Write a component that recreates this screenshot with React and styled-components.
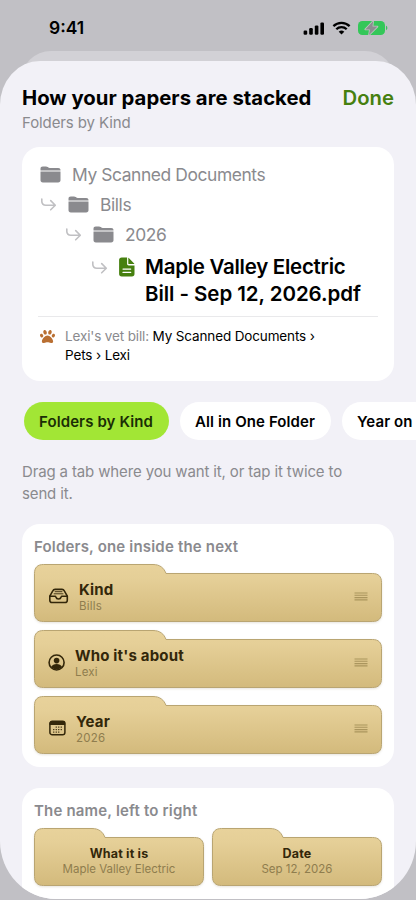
import React from 'react';
import styled, { createGlobalStyle } from 'styled-components';
import { FaPaw } from 'react-icons/fa';

const GlobalStyle = createGlobalStyle`
  * {
    box-sizing: border-box;
  }

  body {
    margin: 0;
    background: #c1c0c5;
    font-family: Inter, "Liberation Sans", sans-serif;
    color: #000;
  }

  svg {
    display: block;
    flex-shrink: 0;
  }
`;

const Screen = styled.div`
  width: 416px;
  height: 900px;
  overflow: hidden;
  display: flex;
  flex-direction: column;
  background: #c1c0c5;
`;

const StatusBar = styled.div`
  height: 51px;
  flex-shrink: 0;
  padding: 5px 28px 0 49px;
  display: flex;
  align-items: center;
  justify-content: space-between;
`;

const Clock = styled.div`
  font-size: 17.5px;
  font-weight: 600;
  line-height: 22px;
`;

const StatusIcons = styled.div`
  display: flex;
  align-items: center;
  gap: 7px;
`;

const PreviousSheet = styled.div`
  height: 40px;
  flex-shrink: 0;
  margin: 0 21px;
  border-radius: 30px 30px 0 0;
  background: #d2d1d6;
`;

const Sheet = styled.div`
  position: relative;
  height: 838px;
  flex-shrink: 0;
  margin-top: -30px;
  padding: 23px 22px 0;
  overflow: hidden;
  border-radius: 40px 40px 56px 56px / 44px 44px 58px 58px;
  background: #f2f1f7;
`;

const Header = styled.div`
  display: flex;
  justify-content: space-between;
`;

const Title = styled.h1`
  margin: 0;
  font-size: 20.3px;
  font-weight: 700;
  line-height: 27px;
  letter-spacing: 0.03px;
  white-space: nowrap;
`;

const DoneButton = styled.button`
  padding: 0;
  border: none;
  background: none;
  color: #46800f;
  font-family: inherit;
  font-size: 20.3px;
  font-weight: 600;
  line-height: 27px;
`;

const Subtitle = styled.div`
  font-size: 15px;
  line-height: 20px;
  letter-spacing: -0.1px;
  color: #8a8a8e;
  margin-top: 2px;
`;

const Card = styled.div`
  border-radius: 18px;
  background: #fff;
`;

const PathCard = styled(Card)`
  height: 234px;
  margin-top: 14px;
  padding: 12px 16px 0;
`;

const PathRow = styled.div`
  display: flex;
  align-items: center;
  gap: 11px;
  height: 30px;
  padding-left: ${({ $indent }) => $indent}px;
  color: #8a8a8e;
  font-size: 17.4px;
  letter-spacing: -0.4px;
`;

const FileRow = styled.div`
  display: flex;
  align-items: flex-start;
  padding: 4px 0 0 53px;
  height: 67px;
`;

const TurnSlot = styled.div`
  margin: 7px 11px 0 0;
`;

const DocSlot = styled.div`
  margin: 4px 10px 0 0;
`;

const FileLine = styled.div`
  font-size: 20.5px;
  font-weight: 600;
  line-height: 27px;
  letter-spacing: ${({ $tracking }) => $tracking}px;
  white-space: nowrap;
`;

const Divider = styled.div`
  height: 1px;
  background: #e9e9eb;
`;

const Example = styled.div`
  display: flex;
  margin-top: 10px;
  padding-left: 2px;
  gap: 10px;
  font-size: 13.5px;
  line-height: 19px;
  letter-spacing: -0.14px;
  white-space: pre-line;

  svg {
    margin-top: 2px;
  }

  em {
    font-style: normal;
    color: #8a8a8e;
  }
`;

const Chips = styled.div`
  display: flex;
  gap: 11px;
  margin: 21px -22px 0 2px;
  overflow: hidden;
`;

const Chip = styled.div`
  flex-shrink: 0;
  height: 38px;
  width: ${({ $width }) => $width}px;
  padding-left: 15px;
  border-radius: 19px;
  background: ${({ $active }) => ($active ? '#a2e635' : '#fff')};
  color: ${({ $active }) => ($active ? '#1a2e05' : '#000')};
  font-size: 15px;
  font-weight: 600;
  line-height: 39px;
  letter-spacing: 0.1px;
  white-space: nowrap;
`;

const Hint = styled.p`
  margin: 21px 0 0;
  font-size: 15px;
  line-height: 21.5px;
  letter-spacing: -0.14px;
  color: #8a8a8e;
  white-space: pre-line;
`;

const StackCard = styled(Card)`
  height: ${({ $height }) => $height}px;
  margin-top: ${({ $top }) => $top}px;
  padding: 12px 12px 0;
`;

const StackTitle = styled.div`
  font-size: 15px;
  font-weight: 600;
  line-height: 21px;
  letter-spacing: 0.18px;
  color: #8a8a8e;
`;

const FolderList = styled.div`
  display: flex;
  flex-direction: ${({ $row }) => ($row ? 'row' : 'column')};
  gap: 8px;
  margin-top: 7px;
`;

const Folder = styled.div`
  position: relative;
  width: ${({ $width }) => $width}px;
  height: 58px;
`;

const FolderBack = styled.svg`
  position: absolute;
  inset: 0;
  overflow: visible;
  filter: drop-shadow(0 1px 1px rgba(80, 60, 10, 0.14));
`;

const FolderContent = styled.div`
  position: relative;
  display: flex;
  align-items: center;
  justify-content: ${({ $center }) => ($center ? 'center' : 'flex-start')};
  height: 100%;
  padding: ${({ $center }) => ($center ? '7px 0 0' : '6px 14px 0 14px')};
  text-align: ${({ $center }) => ($center ? 'center' : 'left')};
`;

const FolderText = styled.div`
  flex: ${({ $center }) => ($center ? 'none' : 1)};
  margin-left: ${({ $center }) => ($center ? 0 : 10)}px;
  padding-top: ${({ $center }) => ($center ? 0 : 1)}px;
`;

const FolderName = styled.div`
  font-size: ${({ $small }) => ($small ? 12.5 : 15)}px;
  font-weight: 700;
  line-height: ${({ $small }) => ($small ? 16 : 18)}px;
  letter-spacing: 0.18px;
  color: #33270a;
`;

const FolderValue = styled.div`
  font-size: 11.5px;
  line-height: 14px;
  letter-spacing: ${({ $small }) => ($small ? 0 : 0.2)}px;
  color: #8f7d4e;
`;

const Signal = () => (
  <svg width="22" height="13" viewBox="0 0 22 13">
    <rect x="0.6" y="8.5" width="3.6" height="4.3" rx="1.2" />
    <rect x="6.2" y="6" width="3.6" height="6.8" rx="1.2" />
    <rect x="11.8" y="3.4" width="3.6" height="9.4" rx="1.2" />
    <rect x="17.4" y="0.4" width="3.6" height="12.4" rx="1.2" />
  </svg>
);

const Wifi = () => (
  <svg width="19" height="14" viewBox="0 0 19 14" fill="none" stroke="#000" strokeWidth="2.3">
    <path d="M1.4 5.1a11.6 11.6 0 0 1 16.2 0" />
    <path d="M4.3 8.3a7.4 7.4 0 0 1 10.4 0" />
    <path d="M9.5 13.6 6.7 10.8a4 4 0 0 1 5.6 0Z" fill="#000" stroke="none" />
  </svg>
);

const Battery = () => (
  <svg width="30" height="14" viewBox="0 0 30 14">
    <rect x="0" y="0" width="27" height="14" rx="4.3" fill="#34c759" />
    <path d="M28 4.8c1.8.6 1.8 3.8 0 4.4Z" fill="#34c759" />
    <path
      d="M15.200 0 7.300 8.400h4.600L11 14l8.500-8.400h-5Z"
      fill="#8d8d92"
      stroke="#bcc6c0"
      strokeWidth="1.600"
      strokeLinejoin="round"
      paintOrder="stroke"
    />
  </svg>
);

const PathFolder = () => (
  <svg width="21" height="17" viewBox="0 0 21 17" fill="#8a8a8e">
    <path d="M.5 4.6V2.8C.5 1.3 1.3.5 2.8.5H6c.8 0 1.2.2 1.7.6l.7.5c.4.3.7.4 1.300.4h8.500c1.500 0 2.300.8 2.300 2.300v.300Z" />
    <path d="M.5 5.500h20v8.500c0 1.600-.8 2.400-2.400 2.400H2.900c-1.600 0-2.400-.8-2.400-2.400Z" />
  </svg>
);

const Turn = () => (
  <svg width="17" height="14" viewBox="-0.4 -0.9 17 14" fill="none" stroke="#c0c0c3" strokeWidth="1.600" strokeLinecap="round" strokeLinejoin="round">
    <path d="M1.400 1.200v2.200c0 2.600 1.500 3.900 4.100 3.900h9.200M10.300 2.700l4.600 4.600-4.600 4.600" />
  </svg>
);

const Doc = () => (
  <svg width="16" height="20" viewBox="0 0 16 20" fill="#46800f">
    <path d="M2.700.500h5.400v6.200c0 1.100.6 1.700 1.700 1.700h5.700v8.400c0 1.700-.9 2.600-2.600 2.600H2.700C1 19.400.1 18.500.1 16.800V3.100C.1 1.400 1 .5 2.700.5Z" />
    <path d="M9.300.7c.4.1.7.4 1 .7l4.400 4.500c.3.300.6.700.7 1.200H9.900c-.4 0-.6-.2-.6-.6Z" />
    <path d="M4 12.100h7.700M4 15.400h7.700" stroke="#fff" strokeWidth="1.200" strokeLinecap="round" />
  </svg>
);

const Tray = () => (
  <svg width="21" height="16" viewBox="-0.8 0 21 16" fill="none" stroke="#33270a" strokeWidth="1.600" strokeLinejoin="round" strokeLinecap="round">
    <path d="M1 8.200 4 2.900C4.500 1.800 5.200 1.400 6.300 1.400h6.900c1.100 0 1.800.4 2.300 1.500l3 5.300v4c0 1.500-.8 2.300-2.300 2.300H3.300C1.800 14.500 1 13.700 1 12.200Z" />
    <path d="M1 8.200h5.300c.5 0 .7.300.8.800.3 1.200 1.200 2 2.600 2s2.300-.8 2.600-2c.1-.5.3-.8.800-.8h5.400" />
    <path d="M6.300 3.700h6.900M5.300 5.800h8.900" strokeWidth="0.900" />
  </svg>
);

const Person = () => (
  <svg width="17" height="17" viewBox="0 0 17 17">
    <circle cx="8.600" cy="8.500" r="7.500" fill="none" stroke="#33270a" strokeWidth="1.600" />
    <circle cx="8.600" cy="6.600" r="2.800" fill="#33270a" />
    <path d="M3.100 13c1-2 3-3 5.500-3s4.500 1 5.500 3c-1.400 1.600-3.300 2.500-5.500 2.500S4.500 14.600 3.100 13Z" fill="#33270a" />
  </svg>
);

const CalendarDots = () => (
  <svg width="18" height="16" viewBox="-0.6 0 18 16" fill="#33270a">
    <rect x="1.300" y="1.300" width="15" height="13.400" rx="2.300" fill="none" stroke="#33270a" strokeWidth="1.500" />
    <path d="M1 5V3.200C1 1.800 1.900 1 3.200 1h11.200c1.300 0 2.200.8 2.200 2.200V5Z" />
    {[[7, 6.4], [9.5, 6.4], [12, 6.4], [4.5, 8.9], [7, 8.9], [9.5, 8.9], [12, 8.9], [4.5, 11.4], [7, 11.4], [9.5, 11.4]].map(([x, y]) => (
      <rect key={`${x}-${y}`} x={x} y={y} width="1.300" height="1.300" rx="0.400" />
    ))}
  </svg>
);

const Grip = () => (
  <svg width="14" height="9" viewBox="0 0 14 9" stroke="#aa955d" strokeWidth="1.1">
    <path d="M.5 1h13M.5 3.300h13M.5 5.600h13M.5 7.900h13" />
  </svg>
);

const FolderShape = ({ width, tab }) => {
  const r = width - 0.5;
  return (
    <FolderBack width={width} height="58" viewBox={`0 0 ${width} 58`}>
      <defs>
        <linearGradient id={`manila-${width}`} x1="0" y1="0" x2="0" y2="1">
          <stop offset="0" stopColor="#e8d29b" />
          <stop offset="0.25" stopColor="#e5cf97" />
          <stop offset="1" stopColor="#d3ba7c" />
        </linearGradient>
      </defs>
      <path
        d={`M.5 9.500C.5 3.500 3.500.5 9.500.5H${tab - 13}C${tab - 6} .5 ${tab - 2} 4 ${tab} 9.500H${r - 9}C${r - 3} 9.500 ${r} 12.500 ${r} 18.500V48.500C${r} 54.500 ${r - 3} 57.500 ${r - 9} 57.500H9.500C3.500 57.500 .5 54.500 .5 48.500Z`}
        fill={`url(#manila-${width})`}
        stroke="#b9a572"
      />
    </FolderBack>
  );
};

const levels = [
  { name: 'Kind', value: 'Bills', icon: <Tray /> },
  { name: "Who it's about", value: 'Lexi', icon: <Person /> },
  { name: 'Year', value: '2026', icon: <CalendarDots /> },
];

const nameParts = [
  { name: 'What it is', value: 'Maple Valley Electric' },
  { name: 'Date', value: 'Sep 12, 2026' },
];

const App = () => (
  <>
    <GlobalStyle />
    <Screen>
      <StatusBar>
        <Clock>9:41</Clock>
        <StatusIcons>
          <Signal />
          <Wifi />
          <Battery />
        </StatusIcons>
      </StatusBar>
      <PreviousSheet />
      <Sheet>
        <Header>
          <Title>How your papers are stacked</Title>
          <DoneButton>Done</DoneButton>
        </Header>
        <Subtitle>Folders by Kind</Subtitle>

        <PathCard>
          <PathRow $indent={2}>
            <PathFolder />
            <span>My Scanned Documents</span>
          </PathRow>
          <PathRow $indent={2}>
            <Turn />
            <PathFolder />
            <span>Bills</span>
          </PathRow>
          <PathRow $indent={27}>
            <Turn />
            <PathFolder />
            <span>2026</span>
          </PathRow>
          <FileRow>
            <TurnSlot>
              <Turn />
            </TurnSlot>
            <DocSlot>
              <Doc />
            </DocSlot>
            <div>
              <FileLine $tracking={-0.27}>Maple Valley Electric</FileLine>
              <FileLine $tracking={-0.06}>Bill - Sep 12, 2026.pdf</FileLine>
            </div>
          </FileRow>
          <Divider />
          <Example>
            <FaPaw size={15} color="#b96f32" />
            <div>
              <em>Lexi's vet bill: </em>
              {'My Scanned Documents ›\nPets › Lexi'}
            </div>
          </Example>
        </PathCard>

        <Chips>
          <Chip $active $width={145}>Folders by Kind</Chip>
          <Chip $width={151}>All in One Folder</Chip>
          <Chip $width={140}>Year on Top</Chip>
        </Chips>
        <Hint>{'Drag a tab where you want it, or tap it twice to\nsend it.'}</Hint>

        <StackCard $height={243} $top={20}>
          <StackTitle>Folders, one inside the next</StackTitle>
          <FolderList>
            {levels.map(({ name, value, icon }) => (
              <Folder key={name} $width={348}>
                <FolderShape width={348} tab={132} />
                <FolderContent>
                  {icon}
                  <FolderText>
                    <FolderName>{name}</FolderName>
                    <FolderValue>{value}</FolderValue>
                  </FolderText>
                  <Grip />
                </FolderContent>
              </Folder>
            ))}
          </FolderList>
        </StackCard>

        <StackCard $height={140} $top={21}>
          <StackTitle>The name, left to right</StackTitle>
          <FolderList $row>
            {nameParts.map(({ name, value }) => (
              <Folder key={name} $width={170}>
                <FolderShape width={170} tab={71} />
                <FolderContent $center>
                  <FolderText $center>
                    <FolderName $small>{name}</FolderName>
                    <FolderValue $small>{value}</FolderValue>
                  </FolderText>
                </FolderContent>
              </Folder>
            ))}
          </FolderList>
        </StackCard>
      </Sheet>
    </Screen>
  </>
);

export default App;
